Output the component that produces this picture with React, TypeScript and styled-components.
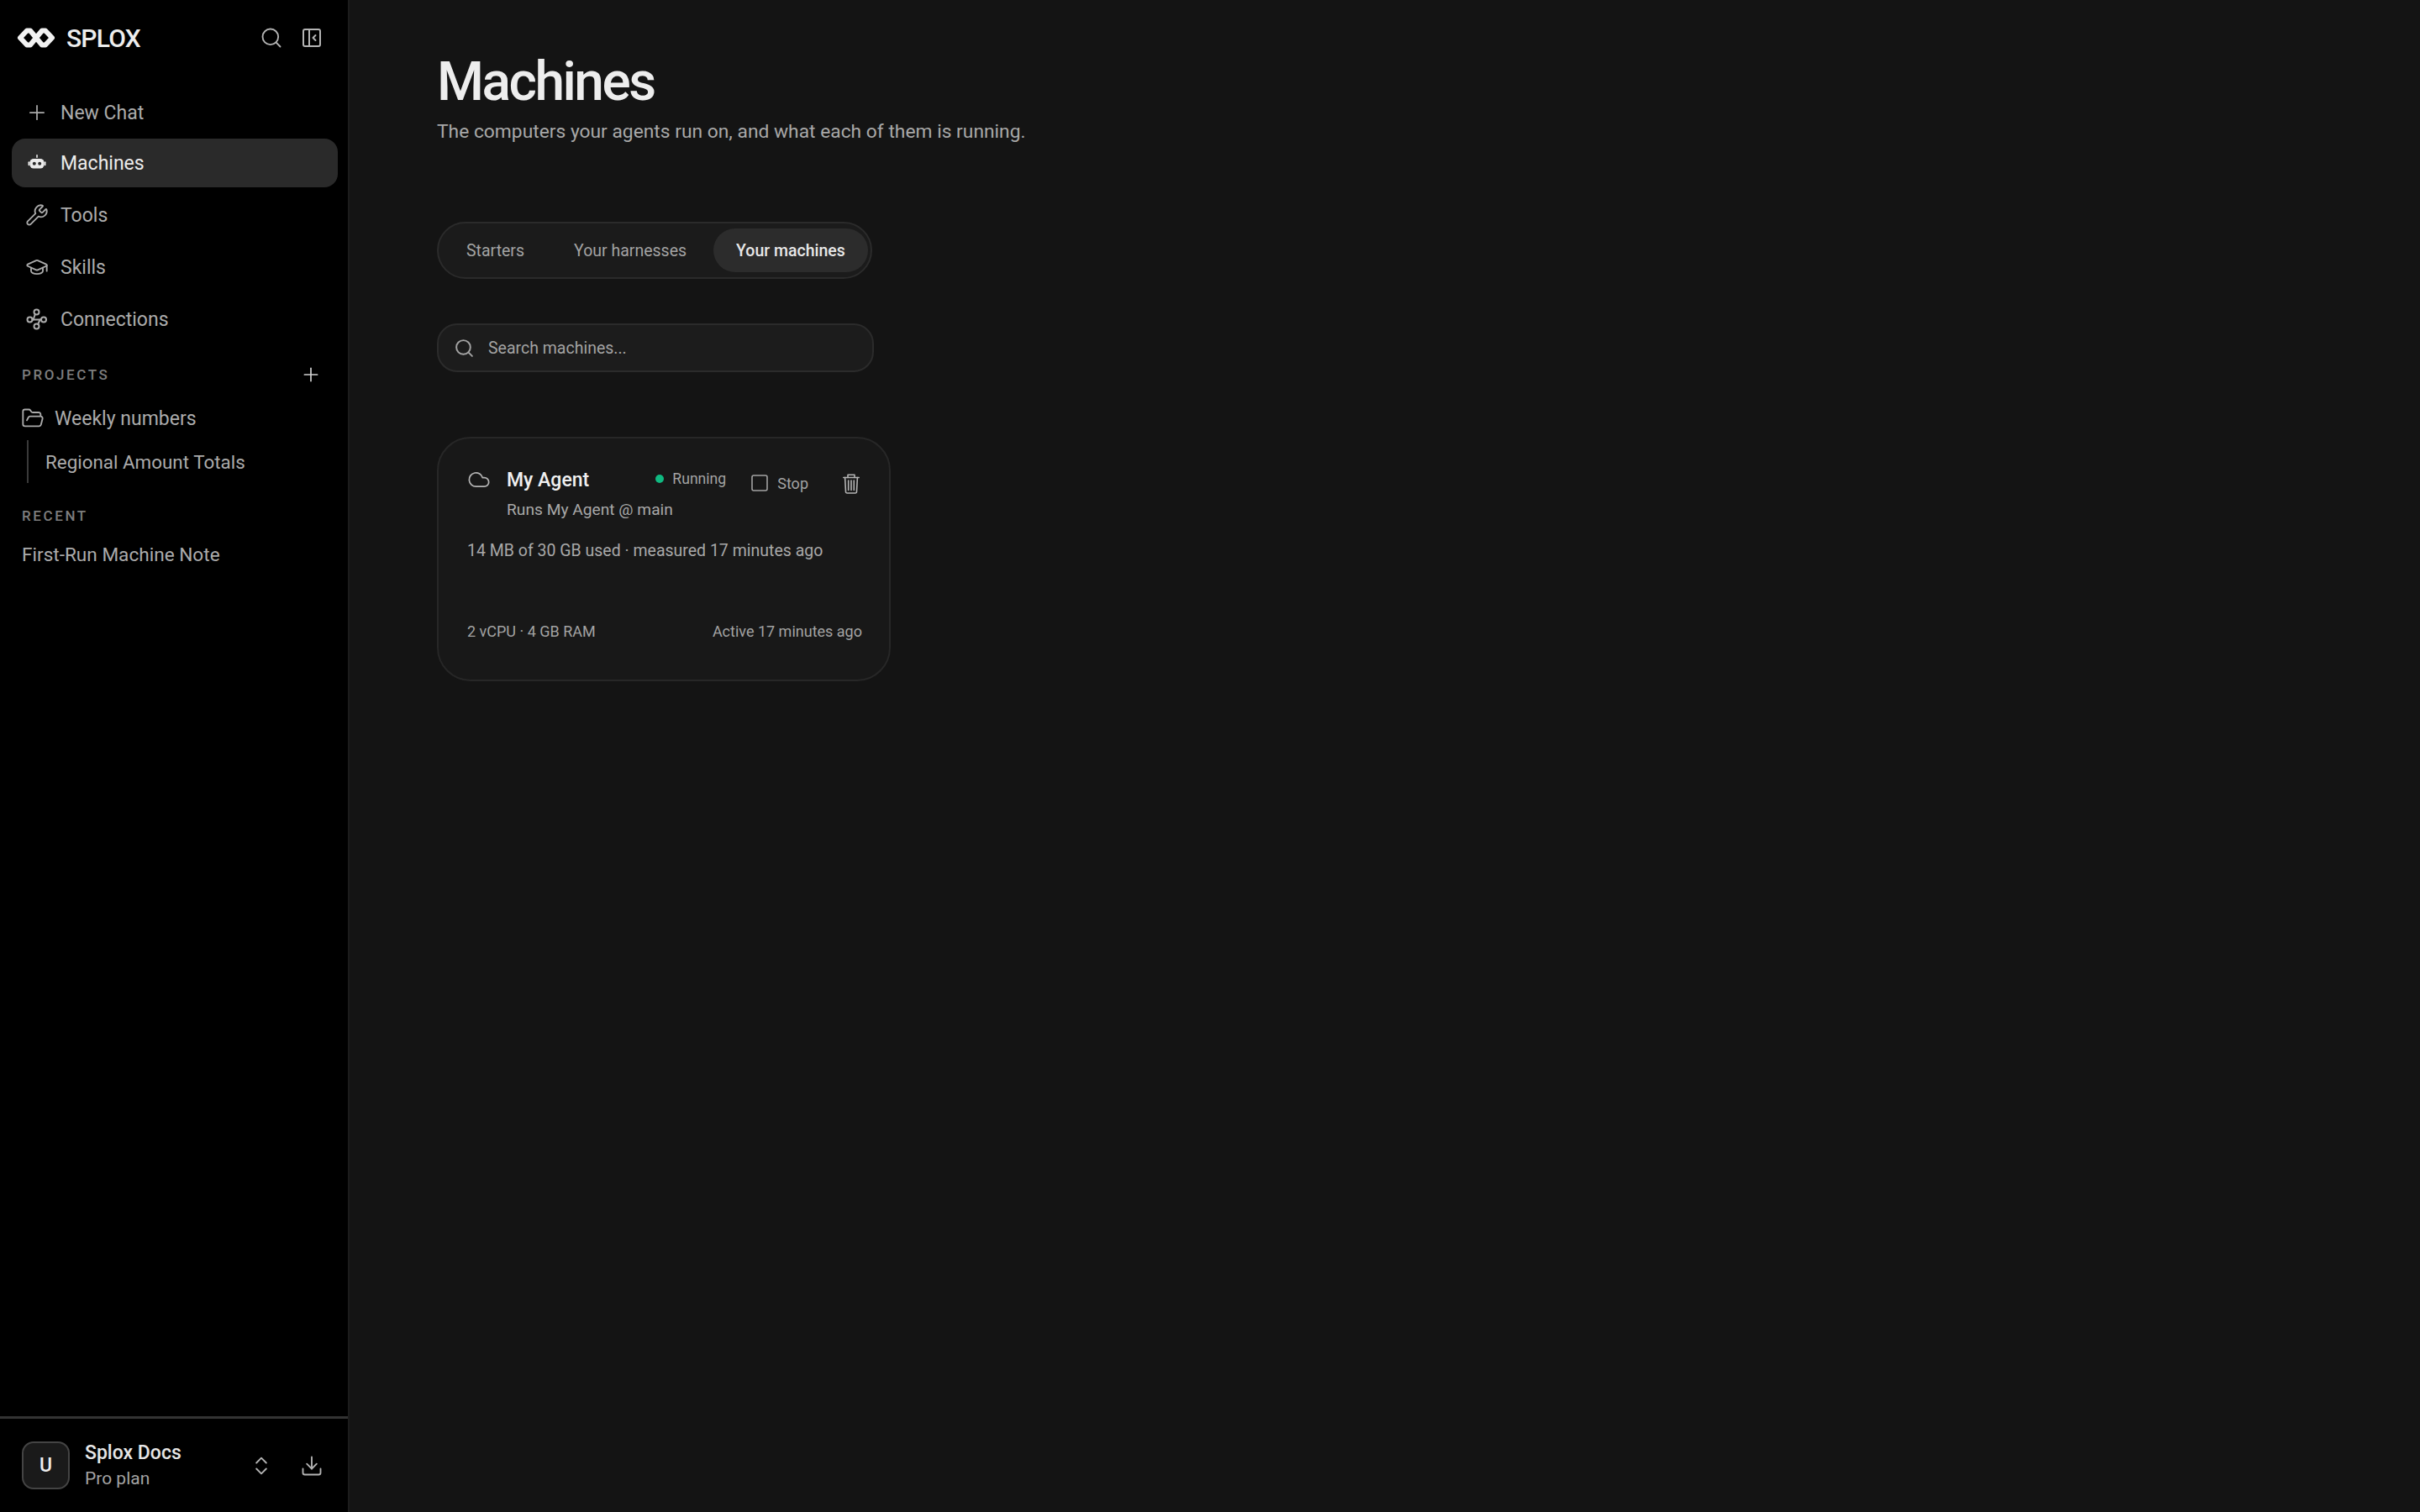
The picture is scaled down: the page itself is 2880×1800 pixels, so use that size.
import React from 'react'
import styled, { createGlobalStyle } from 'styled-components'
import { Plus, Search, Wrench, GraduationCap, FolderOpen, ChevronsUpDown, Download, Cloud, Square } from 'lucide-react'

const GlobalStyle = createGlobalStyle`
  html, body {
    margin: 0;
    padding: 0;
    height: 100%;
    background: #141414;
    font-family: "Roboto", "Liberation Sans", sans-serif;
  }
  #root {
    height: 100%;
  }
`

const LogoMark = () => (
  <svg width="46" height="24" viewBox="0 0 46 24" fill="none">
    <path d="M12 3.5 H16 L23 12 L30 20.5 H34 L42 12 L34 3.5 H30 L23 12 L16 20.5 H12 L4 12 Z" stroke="#f2f2f2" strokeWidth="6" strokeLinejoin="round" />
  </svg>
)

const PanelIcon = () => (
  <svg width="24" height="24" viewBox="0 0 24 24" fill="none" stroke="currentColor" strokeWidth="2" strokeLinecap="round" strokeLinejoin="round">
    <rect x="2" y="2" width="20" height="20" rx="2" />
    <path d="M9 2v20" />
    <path d="M16.5 9l-3 3 3 3" />
  </svg>
)

const BotIcon = () => (
  <svg width="22" height="22" viewBox="0 0 22 22" fill="currentColor">
    <rect x="10.2" y="1" width="1.6" height="4" rx="0.8" />
    <rect x="2.5" y="6" width="17" height="11.5" rx="4.5" />
    <rect x="0.5" y="9.2" width="2" height="5" rx="1" />
    <rect x="19.5" y="9.2" width="2" height="5" rx="1" />
    <circle cx="7.8" cy="11.7" r="2" fill="#2a2a2a" />
    <circle cx="14.2" cy="11.7" r="2" fill="#2a2a2a" />
  </svg>
)

const NodesIcon = () => (
  <svg width="26" height="26" viewBox="0 0 26 26" fill="none" stroke="currentColor" strokeWidth="2" strokeLinecap="round" strokeLinejoin="round">
    <circle cx="12.5" cy="4.5" r="3" />
    <circle cx="4.5" cy="13.5" r="3" />
    <circle cx="21" cy="13.5" r="3" />
    <circle cx="12.5" cy="21.5" r="3" />
    <path d="M7.5 13.5 H18" />
    <path d="M10.8 7 L8.6 13.5" />
    <path d="M14.2 19 L16.6 13.5" />
  </svg>
)

const TrashIcon = () => (
  <svg width="20" height="24" viewBox="0 0 20 24" fill="none" stroke="currentColor" strokeWidth="1.6" strokeLinecap="round" strokeLinejoin="round">
    <path d="M0.8 4.5h18.4" />
    <path d="M6 4.5V1.2h8v3.3" />
    <path d="M2.6 4.5l0.9 16.8A1.6 1.6 0 0 0 5.1 23h9.8a1.6 1.6 0 0 0 1.6-1.7l0.9-16.8" />
    <path d="M6.7 8v11.5M10 8v11.5M13.3 8v11.5" />
  </svg>
)

const App = () => {
  return (
    <Page>
      <GlobalStyle />
      <Sidebar>
        <SidebarTop>
          <BrandRow>
            <Brand>
              <LogoMark />
              <BrandName>SPLOX</BrandName>
            </Brand>
            <BrandActions>
              <Search size={28} strokeWidth={1.6} />
              <PanelIcon />
            </BrandActions>
          </BrandRow>
          <NavList>
            <NavItem>
              <NavIcon><Plus size={30} strokeWidth={1.5} /></NavIcon>
              New Chat
            </NavItem>
            <NavItem $active>
              <NavIcon><BotIcon /></NavIcon>
              Machines
            </NavItem>
            <NavItem>
              <NavIcon><Wrench size={28} strokeWidth={1.6} /></NavIcon>
              Tools
            </NavItem>
            <NavItem>
              <NavIcon><GraduationCap size={28} strokeWidth={1.6} /></NavIcon>
              Skills
            </NavItem>
            <NavItem>
              <NavIcon><NodesIcon /></NavIcon>
              Connections
            </NavItem>
          </NavList>
          <SectionHead>
            <SectionLabel>PROJECTS</SectionLabel>
            <Plus size={26} strokeWidth={1.6} color="#d0d0d0" />
          </SectionHead>
          <ProjectRow>
            <FolderOpen size={28} strokeWidth={1.6} />
            Weekly numbers
          </ProjectRow>
          <ProjectChildren>
            <ChildLink>Regional Amount Totals</ChildLink>
          </ProjectChildren>
          <RecentLabel>RECENT</RecentLabel>
          <RecentLink>First-Run Machine Note</RecentLink>
        </SidebarTop>
        <SidebarFooter>
          <Avatar>U</Avatar>
          <Account>
            <AccountName>Splox Docs</AccountName>
            <AccountPlan>Pro plan</AccountPlan>
          </Account>
          <FooterIcons>
            <ChevronsUpDown size={28} strokeWidth={1.6} />
            <Download size={28} strokeWidth={1.6} />
          </FooterIcons>
        </SidebarFooter>
      </Sidebar>
      <Main>
        <Title>Machines</Title>
        <Subtitle>The computers your agents run on, and what each of them is running.</Subtitle>
        <Tabs>
          <Tab>Starters</Tab>
          <Tab>Your harnesses</Tab>
          <Tab $active>Your machines</Tab>
        </Tabs>
        <SearchBox>
          <Search size={25} strokeWidth={1.9} />
          Search machines...
        </SearchBox>
        <Card>
          <CardHead>
            <CloudSlot><Cloud size={28} strokeWidth={1.5} /></CloudSlot>
            <CardTitles>
              <CardName>My Agent</CardName>
              <CardSub>Runs My Agent @ main</CardSub>
            </CardTitles>
            <Status><Dot />Running</Status>
            <StopButton><Square size={24} strokeWidth={1.6} />Stop</StopButton>
            <TrashSlot><TrashIcon /></TrashSlot>
          </CardHead>
          <Usage>14 MB of 30 GB used · measured 17 minutes ago</Usage>
          <CardFoot>
            <span>2 vCPU · 4 GB RAM</span>
            <span>Active 17 minutes ago</span>
          </CardFoot>
        </Card>
      </Main>
    </Page>
  )
}

const Page = styled.div`
  display: flex;
  height: 1800px;
  background: #141414;
  overflow: hidden;
`

const Sidebar = styled.aside`
  width: 414px;
  flex-shrink: 0;
  display: flex;
  flex-direction: column;
  justify-content: space-between;
  background: #000;
  border-right: 2px solid #1c1c1c;
`

const SidebarTop = styled.div`
  display: flex;
  flex-direction: column;
`

const BrandRow = styled.div`
  display: flex;
  align-items: center;
  justify-content: space-between;
  padding: 28px 31px 0 20px;
  height: 34px;
`

const Brand = styled.div`
  display: flex;
  align-items: center;
  gap: 13px;
`

const BrandName = styled.span`
  font-size: 30px;
  font-weight: 500;
  color: #ededed;
  letter-spacing: -0.8px;
`

const BrandActions = styled.div`
  display: flex;
  align-items: center;
  gap: 22px;
  color: #b4b4b4;
`

const NavList = styled.nav`
  display: flex;
  flex-direction: column;
  gap: 4px;
  padding: 45px 12px 0 14px;
`

const NavItem = styled.div<{ $active?: boolean }>`
  display: flex;
  align-items: center;
  height: 58px;
  padding-left: 16px;
  gap: 14px;
  border-radius: 16px;
  font-size: 23px;
  background: ${(p) => (p.$active ? '#2a2a2a' : 'transparent')};
  color: ${(p) => (p.$active ? '#ececec' : '#ababab')};

  &:first-child {
    height: 54px;
  }
`

const NavIcon = styled.span`
  width: 28px;
  height: 28px;
  display: flex;
  align-items: center;
  justify-content: center;
`

const SectionHead = styled.div`
  display: flex;
  align-items: center;
  justify-content: space-between;
  height: 24px;
  padding: 25px 31px 0 26px;
`

const SectionLabel = styled.span`
  font-size: 17px;
  line-height: 20px;
  letter-spacing: 2.6px;
  color: #7d7d7d;
  font-weight: 500;
`

const ProjectRow = styled.div`
  display: flex;
  align-items: center;
  gap: 12px;
  height: 28px;
  padding: 26px 0 0 25px;
  font-size: 23px;
  color: #ababab;
`

const ProjectChildren = styled.div`
  margin: 12px 0 0 32px;
  padding: 11px 0 9px 20px;
  border-left: 2px solid #3a3a3a;
`

const ChildLink = styled.div`
  font-size: 22.4px;
  line-height: 31px;
  color: #ababab;
`

const RecentLabel = styled(SectionLabel)`
  padding: 29px 0 0 26px;
`

const RecentLink = styled.div`
  padding: 22px 0 0 26px;
  font-size: 22.6px;
  line-height: 30px;
  color: #ababab;
`

const SidebarFooter = styled.div`
  display: flex;
  align-items: center;
  height: 111px;
  padding: 0 29px 0 26px;
  border-top: 3px solid #333;
`

const Avatar = styled.div`
  width: 53px;
  height: 53px;
  display: flex;
  align-items: center;
  justify-content: center;
  background: #1a1a1a;
  border: 2px solid #444;
  border-radius: 14px;
  color: #eee;
  font-size: 23px;
  font-weight: 500;
`

const Account = styled.div`
  flex: 1;
  margin-left: 18px;
  display: flex;
  flex-direction: column;
  gap: 2px;
`

const AccountName = styled.span`
  font-size: 23px;
  line-height: 28px;
  font-weight: 500;
  color: #e6e6e6;
`

const AccountPlan = styled.span`
  font-size: 21px;
  line-height: 28px;
  color: #a3a3a3;
`

const FooterIcons = styled.div`
  display: flex;
  gap: 32px;
  color: #b4b4b4;
`

const Main = styled.main`
  flex: 1;
  padding: 60px 0 0 104px;
`

const Title = styled.h1`
  margin: 0;
  font-size: 64px;
  line-height: 76px;
  font-weight: 500;
  letter-spacing: -2.5px;
  color: #ededed;
`

const Subtitle = styled.p`
  margin: 5px 0 0;
  font-size: 22.8px;
  line-height: 32px;
  color: #a8a8a8;
`

const Tabs = styled.div`
  display: inline-flex;
  align-items: center;
  box-sizing: border-box;
  margin-top: 91px;
  height: 68px;
  width: 518px;
  padding: 0 6px;
  gap: 5px;
  background: #1b1b1b;
  border: 2px solid #2b2b2b;
  border-radius: 34px;
`

const Tab = styled.div<{ $active?: boolean }>`
  height: 52px;
  display: flex;
  align-items: center;
  padding: 0 27px;
  border-radius: 26px;
  white-space: nowrap;
  font-size: 19.5px;
  font-weight: ${(p) => (p.$active ? 500 : 400)};
  background: ${(p) => (p.$active ? '#2c2c2c' : 'transparent')};
  color: ${(p) => (p.$active ? '#e8e8e8' : '#a3a3a3')};
`

const SearchBox = styled.div`
  display: flex;
  align-items: center;
  box-sizing: border-box;
  margin-top: 53px;
  width: 520px;
  height: 58px;
  padding: 0 0 0 18px;
  gap: 16px;
  background: #1c1c1c;
  border: 2px solid #2b2b2b;
  border-radius: 24px;
  font-size: 19.5px;
  color: #a3a3a3;
`

const Card = styled.article`
  box-sizing: border-box;
  margin-top: 77px;
  width: 540px;
  height: 291px;
  padding: 35px 32px 0 34px;
  background: #181818;
  border: 2px solid #272727;
  border-radius: 40px;
`

const CardHead = styled.div`
  display: flex;
  align-items: flex-start;
  white-space: nowrap;
`

const CloudSlot = styled.div`
  width: 47px;
  flex-shrink: 0;
  color: #b4b4b4;
`

const CardTitles = styled.div`
  flex: 1;
  min-width: 0;
  display: flex;
  flex-direction: column;
  gap: 7px;
`

const CardName = styled.span`
  font-size: 23px;
  line-height: 30px;
  font-weight: 500;
  color: #f0f0f0;
`

const CardSub = styled.span`
  font-size: 19.2px;
  line-height: 26px;
  color: #a8a8a8;
`

const Status = styled.div`
  display: flex;
  align-items: center;
  gap: 10px;
  height: 24px;
  margin: 1px 28px 0 0;
  font-size: 17.6px;
  color: #a3a3a3;
`

const Dot = styled.span`
  width: 10px;
  height: 10px;
  border-radius: 50%;
  background: #10b981;
`

const StopButton = styled.div`
  display: flex;
  align-items: center;
  gap: 9px;
  height: 24px;
  margin: 6px 41px 0 0;
  font-size: 18px;
  color: #a3a3a3;
`

const TrashSlot = styled.div`
  margin: 7px 3px 0 0;
  height: 24px;
  color: #b4b4b4;
`

const Usage = styled.div`
  margin-top: 23px;
  font-size: 19.5px;
  line-height: 26px;
  color: #a8a8a8;
`

const CardFoot = styled.div`
  display: flex;
  justify-content: space-between;
  margin-top: 71px;
  font-size: 18px;
  line-height: 24px;
  color: #a3a3a3;
`

export default App
